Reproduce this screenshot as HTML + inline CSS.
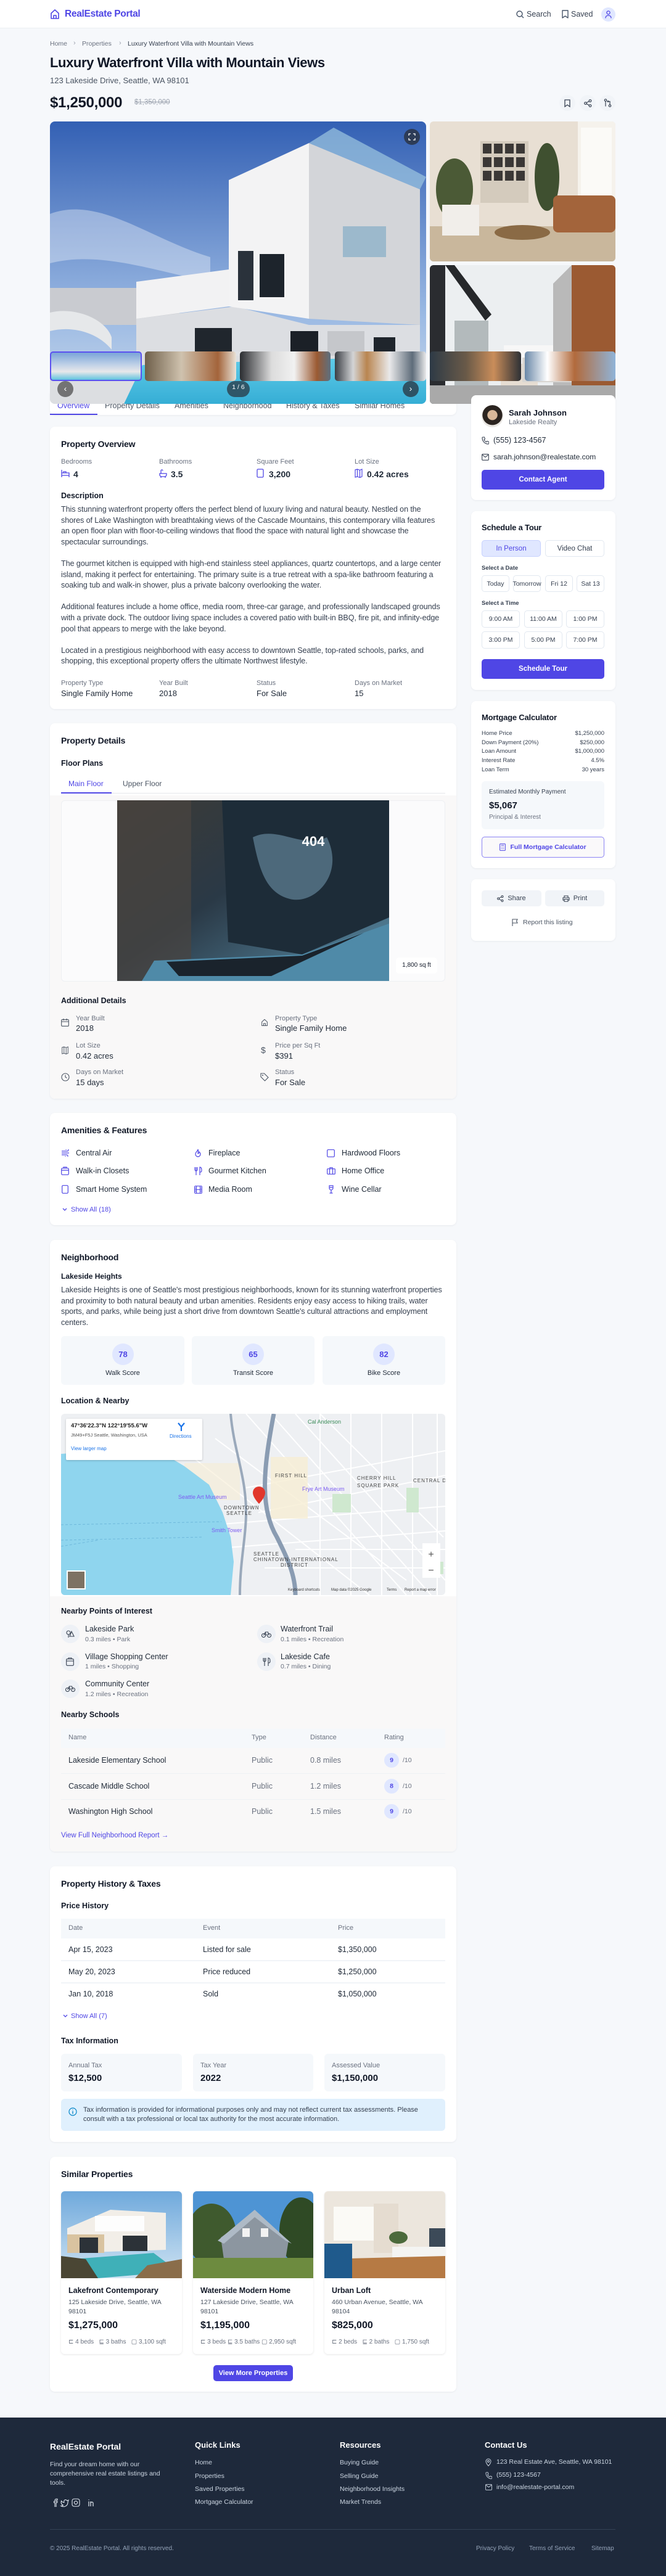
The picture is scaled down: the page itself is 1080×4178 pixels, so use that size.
<!DOCTYPE html>
<html><head><meta charset="utf-8">
<style>
*{box-sizing:border-box}
body{margin:0;width:1080px;height:4178px;position:relative;background:#f6f8fb;font-family:"Liberation Sans",sans-serif;color:#1f2937;overflow:hidden}
.t{position:absolute;white-space:nowrap;line-height:1}
.b{position:absolute}
.card{position:absolute;left:81px;width:659px;background:#fff;border-radius:8px;box-shadow:0 1px 3px rgba(15,23,42,.06)}
.scard{position:absolute;left:764px;width:234px;background:#fff;border-radius:8px;box-shadow:0 1px 3px rgba(15,23,42,.06)}
.h{font-size:14px;font-weight:700;color:#111827;letter-spacing:-.2px}
.h2{font-size:12.5px;font-weight:700;color:#111827}
.lab{font-size:11px;color:#6b7280}
.val{font-size:13px;color:#1f2937}
.pu{color:#4f46e5}
.g{color:#6b7280}
.para{position:absolute;left:99px;width:622px;font-size:12.6px;line-height:17.6px;color:#374151;letter-spacing:-.1px}
.para p{margin:0 0 17.6px}
.btn{position:absolute;border-radius:5px;display:flex;align-items:center;justify-content:center;font-size:11.5px}
.ob{border:1px solid #e2e8f0;background:#fff;color:#374151}
svg{display:block}
.ic{position:absolute}
</style></head><body>

<!-- HEADER -->
<div class="b" style="left:0;top:0;width:1080px;height:46px;background:#fff;border-bottom:1px solid #eceff3"></div>
<svg class="ic" style="left:81px;top:14px" width="16" height="18" viewBox="0 0 16 18"><path d="M2 7.5L8 2l6 5.5V16H2z M6 16v-5h4v5" fill="none" stroke="#4f46e5" stroke-width="1.6" stroke-linejoin="round"/></svg>
<div class="t" style="left:105px;top:15px;font-size:15.5px;font-weight:700;color:#4f46e5;letter-spacing:-.3px">RealEstate Portal</div>
<svg class="ic" style="left:837px;top:17px" width="13" height="13" viewBox="0 0 13 13"><circle cx="5.5" cy="5.5" r="4.5" fill="none" stroke="#475569" stroke-width="1.4"/><path d="M9 9l3 3" stroke="#475569" stroke-width="1.4"/></svg>
<div class="t" style="left:854px;top:17px;font-size:12.5px;color:#374151">Search</div>
<svg class="ic" style="left:911px;top:16px" width="11" height="14" viewBox="0 0 11 14"><path d="M1 1h9v12l-4.5-3L1 13z" fill="none" stroke="#475569" stroke-width="1.4" stroke-linejoin="round"/></svg>
<div class="t" style="left:926px;top:17px;font-size:12.5px;color:#374151">Saved</div>
<div class="b" style="left:975px;top:12px;width:23px;height:23px;border-radius:50%;background:#e0e7ff"></div>
<svg class="ic" style="left:981px;top:17px" width="11" height="13" viewBox="0 0 11 13"><circle cx="5.5" cy="3.5" r="2.6" fill="none" stroke="#4f46e5" stroke-width="1.3"/><path d="M1 12.5c0-3 2-4.5 4.5-4.5S10 9.5 10 12.5" fill="none" stroke="#4f46e5" stroke-width="1.3"/></svg>

<!-- BREADCRUMB / TITLE -->
<div class="t" style="left:81px;top:66px;font-size:10.5px;color:#6b7280">Home</div>
<div class="t" style="left:119px;top:65px;font-size:11px;color:#9ca3af">›</div>
<div class="t" style="left:133px;top:66px;font-size:10.5px;color:#6b7280">Properties</div>
<div class="t" style="left:193px;top:65px;font-size:11px;color:#9ca3af">›</div>
<div class="t" style="left:207px;top:66px;font-size:10.5px;color:#374151">Luxury Waterfront Villa with Mountain Views</div>
<div class="t" style="left:81px;top:91px;font-size:22px;font-weight:700;color:#111827;letter-spacing:-.4px">Luxury Waterfront Villa with Mountain Views</div>
<div class="t" style="left:81px;top:124px;font-size:13px;color:#4b5563">123 Lakeside Drive, Seattle, WA 98101</div>
<div class="t" style="left:81px;top:155px;font-size:24px;font-weight:700;color:#111827;letter-spacing:-.3px">$1,250,000</div>
<div class="t" style="left:218px;top:161px;font-size:11.5px;color:#9ca3af;text-decoration:line-through">$1,350,000</div>
<div class="b" style="left:907px;top:154px;width:26px;height:26px;border-radius:50%;background:#f1f4f8"></div>
<div class="b" style="left:940px;top:154px;width:26px;height:26px;border-radius:50%;background:#f1f4f8"></div>
<div class="b" style="left:972px;top:154px;width:26px;height:26px;border-radius:50%;background:#f1f4f8"></div>
<svg class="ic" style="left:915px;top:161px" width="10" height="13" viewBox="0 0 10 13"><path d="M1 1h8v11l-4-3-4 3z" fill="none" stroke="#374151" stroke-width="1.3"/></svg>
<svg class="ic" style="left:947px;top:161px" width="13" height="13" viewBox="0 0 13 13"><circle cx="10" cy="2.5" r="1.8" fill="none" stroke="#374151" stroke-width="1.2"/><circle cx="2.5" cy="6.5" r="1.8" fill="none" stroke="#374151" stroke-width="1.2"/><circle cx="10" cy="10.5" r="1.8" fill="none" stroke="#374151" stroke-width="1.2"/><path d="M4 5.6l4.5-2.4M4 7.4l4.5 2.4" stroke="#374151" stroke-width="1.2"/></svg>
<svg class="ic" style="left:979px;top:160px" width="13" height="14" viewBox="0 0 13 14"><circle cx="3" cy="2.5" r="1.7" fill="none" stroke="#374151" stroke-width="1.2"/><circle cx="10" cy="11.5" r="1.7" fill="none" stroke="#374151" stroke-width="1.2"/><path d="M3 4.5v8M10 9.5V4.5H6M7.5 3L6 4.5 7.5 6" fill="none" stroke="#374151" stroke-width="1.2"/></svg>

<!-- TABS CARD (behind gallery) -->
<div class="card" style="top:632px;height:41px"></div>
<div class="t pu" style="left:93px;top:652px;font-size:12.5px">Overview</div>
<div class="t" style="left:170px;top:652px;font-size:12.5px;color:#4b5563">Property Details</div>
<div class="t" style="left:283px;top:652px;font-size:12.5px;color:#4b5563">Amenities</div>
<div class="t" style="left:362px;top:652px;font-size:12.5px;color:#4b5563">Neighborhood</div>
<div class="t" style="left:464px;top:652px;font-size:12.5px;color:#4b5563">History &amp; Taxes</div>
<div class="t" style="left:575px;top:652px;font-size:12.5px;color:#4b5563">Similar Homes</div>
<div class="b" style="left:81px;top:671px;width:77px;height:2px;background:#4f46e5"></div>

<!-- GALLERY MAIN -->
<div class="b" style="left:81px;top:197px;width:610px;height:458px;border-radius:8px;overflow:hidden">
<svg width="610" height="458" viewBox="0 0 610 458">
<defs><linearGradient id="sky" x1="0" y1="0" x2="0" y2="1"><stop offset="0" stop-color="#3360b4"/><stop offset=".7" stop-color="#9dbbe4"/><stop offset="1" stop-color="#c9d8ea"/></linearGradient>
<linearGradient id="pool" x1="0" y1="0" x2="0" y2="1"><stop offset="0" stop-color="#4cc6e6"/><stop offset="1" stop-color="#1aa3d0"/></linearGradient></defs>
<rect width="610" height="458" fill="url(#sky)"/>
<path d="M0 150 C80 120 160 190 260 220 L260 260 C160 240 80 210 0 230z" fill="#fff" opacity=".35"/>
<rect x="0" y="270" width="210" height="60" fill="#c9cbd0"/>
<polygon points="140,260 290,240 290,300 140,320" fill="#f2f2f3"/>
<polygon points="140,320 300,300 420,330 600,330 600,420 140,420" fill="#dcdee2"/>
<polygon points="290,95 420,35 420,320 290,300" fill="#f3f3f4"/>
<polygon points="420,35 600,110 600,330 420,320" fill="#d3d5d9"/>
<polygon points="420,35 460,10 610,90 600,110" fill="#9cc6e0" opacity=".7"/>
<rect x="340" y="215" width="40" height="70" fill="#1d242c"/>
<rect x="305" y="210" width="25" height="80" fill="#2a323b"/>
<rect x="475" y="170" width="70" height="50" fill="#8fb2c8" opacity=".8"/>
<rect x="390" y="340" width="45" height="75" fill="#1b2027"/>
<rect x="235" y="335" width="60" height="80" fill="#20262d"/>
<rect x="525" y="350" width="35" height="65" fill="#1f252c"/>
<rect x="450" y="340" width="60" height="70" fill="#c5c7cb"/>
<polygon points="0,390 150,380 610,380 610,458 0,458" fill="#d8dadd"/>
<polygon points="150,395 610,380 610,458 120,458" fill="url(#pool)"/>
<path d="M0 310 C40 300 90 320 100 350 L100 370 C80 345 40 330 0 340z" fill="#e6e8ea"/>
</svg>
<div class="b" style="left:0;top:373px;width:610px;height:85px;background:rgba(255,255,255,.12)"></div>
</div>
<div class="b" style="left:655px;top:209px;width:26px;height:26px;border-radius:50%;background:rgba(40,45,55,.75)"></div>
<svg class="ic" style="left:662px;top:216px" width="12" height="12" viewBox="0 0 12 12"><path d="M1 4V1h3M8 1h3v3M11 8v3H8M4 11H1V8" fill="none" stroke="#fff" stroke-width="1.3"/></svg>

<!-- RIGHT IMAGES -->
<div class="b" style="left:697px;top:197px;width:301px;height:227px;border-radius:6px;overflow:hidden">
<svg width="301" height="227" viewBox="0 0 301 227">
<rect width="301" height="227" fill="#e8dfd3"/>
<rect x="240" y="0" width="61" height="190" fill="#f5f2ec"/>
<rect x="245" y="10" width="50" height="160" fill="#fbfaf7"/>
<rect x="82" y="32" width="78" height="100" fill="#d4cbbd"/>
<g fill="#3b3836"><rect x="86" y="36" width="14" height="16"/><rect x="104" y="36" width="14" height="16"/><rect x="122" y="36" width="14" height="16"/><rect x="140" y="36" width="14" height="16"/><rect x="86" y="58" width="14" height="16"/><rect x="104" y="58" width="14" height="16"/><rect x="122" y="58" width="14" height="16"/><rect x="140" y="58" width="14" height="16"/><rect x="86" y="80" width="14" height="16"/><rect x="104" y="80" width="14" height="16"/><rect x="122" y="80" width="14" height="16"/><rect x="140" y="80" width="14" height="16"/></g>
<ellipse cx="40" cy="110" rx="30" ry="50" fill="#4b5a36"/>
<ellipse cx="190" cy="90" rx="20" ry="55" fill="#3f5030"/>
<rect x="0" y="170" width="301" height="57" fill="#c9b79c"/>
<rect x="200" y="120" width="101" height="60" rx="8" fill="#a3643b"/>
<rect x="20" y="135" width="60" height="50" fill="#f1eeea"/>
<ellipse cx="150" cy="180" rx="45" ry="12" fill="#8a6a45"/>
</svg></div>
<div class="b" style="left:697px;top:430px;width:301px;height:225px;border-radius:6px;overflow:hidden">
<svg width="301" height="225" viewBox="0 0 301 225">
<rect width="301" height="225" fill="#eceff1"/>
<polygon points="230,0 301,0 301,225 230,225" fill="#9b5a32"/>
<polygon points="200,30 230,0 230,225 200,225" fill="#b9b9b9"/>
<rect x="0" y="0" width="25" height="225" fill="#2a2c30"/>
<polygon points="25,0 40,0 100,80 90,90" fill="#26282b"/>
<rect x="40" y="90" width="55" height="110" fill="#8d9699" opacity=".6"/>
<rect x="120" y="130" width="80" height="60" fill="#f7f7f7"/>
<rect x="115" y="160" width="60" height="40" fill="#e6ddd2"/>
<rect x="0" y="195" width="301" height="30" fill="#a9a9a9"/>
<rect x="150" y="150" width="80" height="40" fill="#d9d6d2"/>
</svg></div>

<!-- THUMBNAILS -->
<div class="b" style="left:81px;top:570px;width:149px;height:48px;border-radius:5px;background:linear-gradient(#7aa4d8 0%,#b9cde6 40%,#e8e8ea 70%,#5fc3df 100%);border:2px solid #5b50f0"></div>
<div class="b" style="left:235px;top:570px;width:148px;height:48px;border-radius:5px;background:linear-gradient(90deg,#6e5f4a,#cfc2ae 40%,#a3643b 80%,#e9e3d8)"></div>
<div class="b" style="left:389px;top:570px;width:147px;height:48px;border-radius:5px;background:linear-gradient(90deg,#2b2d31,#dcdcdc 35%,#f1f1f1 60%,#9b5a32 85%,#5c6f80)"></div>
<div class="b" style="left:543px;top:570px;width:148px;height:48px;border-radius:5px;background:linear-gradient(90deg,#3a3e44,#d3d4d6 20%,#b98550 35%,#e9e9ea 60%,#5e6c7a 85%,#e9e9ea)"></div>
<div class="b" style="left:697px;top:570px;width:148px;height:48px;border-radius:5px;background:linear-gradient(90deg,#2d3a46,#6a5a48 40%,#c98d5a 70%,#2d3035)"></div>
<div class="b" style="left:851px;top:570px;width:147px;height:48px;border-radius:5px;background:linear-gradient(90deg,#6a88a8,#ffffff 25%,#b26a3c 55%,#90b4d8)"></div>
<div class="b" style="left:93px;top:618px;width:26px;height:26px;border-radius:50%;background:rgba(70,70,70,.7);color:#fff;font-size:14px;text-align:center;line-height:25px">‹</div>
<div class="b" style="left:653px;top:618px;width:26px;height:26px;border-radius:50%;background:rgba(40,50,60,.75);color:#fff;font-size:14px;text-align:center;line-height:25px">›</div>
<div class="b" style="left:368px;top:618px;width:37px;height:26px;border-radius:13px;background:rgba(40,45,55,.7);color:#fff;font-size:10.5px;text-align:center;line-height:20px">1 / 6</div>

<!-- OVERVIEW CARD -->
<div class="card" style="top:692px;height:458px"></div>
<div class="t h" style="left:99px;top:713px">Property Overview</div>
<div class="t lab" style="left:99px;top:744px">Bedrooms</div>
<div class="t lab" style="left:258px;top:744px">Bathrooms</div>
<div class="t lab" style="left:416px;top:744px">Square Feet</div>
<div class="t lab" style="left:575px;top:744px">Lot Size</div>
<svg class="ic" style="left:99px;top:762px" width="14" height="12" viewBox="0 0 14 12"><path d="M1 0v12M1 5h12v7M1 9h12M4 5V3h4v2" fill="none" stroke="#4f46e5" stroke-width="1.3"/></svg>
<div class="t" style="left:119px;top:762px;font-size:14px;font-weight:700">4</div>
<svg class="ic" style="left:258px;top:761px" width="13" height="14" viewBox="0 0 13 14"><path d="M3 7V2.5A1.5 1.5 0 0 1 6 2.5M1 7h11v2a3 3 0 0 1-3 3H4a3 3 0 0 1-3-3zM3 12v2M10 12v2" fill="none" stroke="#4f46e5" stroke-width="1.3"/></svg>
<div class="t" style="left:277px;top:762px;font-size:14px;font-weight:700">3.5</div>
<svg class="ic" style="left:416px;top:760px" width="12" height="15" viewBox="0 0 12 15"><rect x="1" y="1" width="10" height="13" rx="1.5" fill="none" stroke="#4f46e5" stroke-width="1.3"/></svg>
<div class="t" style="left:436px;top:762px;font-size:14px;font-weight:700">3,200</div>
<svg class="ic" style="left:575px;top:760px" width="13" height="15" viewBox="0 0 13 15"><path d="M1 2l3.5-1 4 1.5L12 1v12l-3.5 1.5-4-1.5L1 14zM4.5 1v12M8.5 2.5v12" fill="none" stroke="#4f46e5" stroke-width="1.2"/></svg>
<div class="t" style="left:595px;top:762px;font-size:14px;font-weight:700">0.42 acres</div>
<div class="t h2" style="left:99px;top:798px">Description</div>
<div class="para" style="top:818px">
<p>This stunning waterfront property offers the perfect blend of luxury living and natural beauty. Nestled on the shores of Lake Washington with breathtaking views of the Cascade Mountains, this contemporary villa features an open floor plan with floor-to-ceiling windows that flood the space with natural light and showcase the spectacular surroundings.</p>
<p>The gourmet kitchen is equipped with high-end stainless steel appliances, quartz countertops, and a large center island, making it perfect for entertaining. The primary suite is a true retreat with a spa-like bathroom featuring a soaking tub and walk-in shower, plus a private balcony overlooking the water.</p>
<p>Additional features include a home office, media room, three-car garage, and professionally landscaped grounds with a private dock. The outdoor living space includes a covered patio with built-in BBQ, fire pit, and infinity-edge pool that appears to merge with the lake beyond.</p>
<p>Located in a prestigious neighborhood with easy access to downtown Seattle, top-rated schools, parks, and shopping, this exceptional property offers the ultimate Northwest lifestyle.</p>
</div>
<div class="t lab" style="left:99px;top:1103px">Property Type</div>
<div class="t lab" style="left:258px;top:1103px">Year Built</div>
<div class="t lab" style="left:416px;top:1103px">Status</div>
<div class="t lab" style="left:575px;top:1103px">Days on Market</div>
<div class="t val" style="left:99px;top:1118px">Single Family Home</div>
<div class="t val" style="left:258px;top:1118px">2018</div>
<div class="t val" style="left:416px;top:1118px">For Sale</div>
<div class="t val" style="left:575px;top:1118px">15</div>

<!-- SIDEBAR: AGENT -->
<div class="scard" style="top:641px;height:170px"></div>
<div class="b" style="left:781px;top:657px;width:35px;height:36px;border-radius:50%;background:radial-gradient(circle at 50% 45%,#d9b89a 0 30%,#2b2420 32% 60%,#e9e6e2 62%)"></div>
<div class="t" style="left:825px;top:663px;font-size:13px;font-weight:700;color:#111827">Sarah Johnson</div>
<div class="t g" style="left:825px;top:680px;font-size:11px">Lakeside Realty</div>
<svg class="ic" style="left:781px;top:708px" width="12" height="13" viewBox="0 0 12 13"><path d="M2 1h2.5l1 3-1.5 1.2a7 7 0 0 0 3.5 3.6L8.8 7.5l3 1V11a1.2 1.2 0 0 1-1.3 1.2A10 10 0 0 1 1 2.3 1.2 1.2 0 0 1 2 1z" fill="none" stroke="#374151" stroke-width="1.1"/></svg>
<div class="t" style="left:800px;top:708px;font-size:12.5px;color:#1f2937">(555) 123-4567</div>
<svg class="ic" style="left:781px;top:736px" width="12" height="11" viewBox="0 0 12 11"><rect x=".7" y=".7" width="10.6" height="9.6" rx="1" fill="none" stroke="#374151" stroke-width="1.1"/><path d="M1 1.5l5 4 5-4" fill="none" stroke="#374151" stroke-width="1.1"/></svg>
<div class="t" style="left:800px;top:735px;font-size:12px;color:#1f2937">sarah.johnson@realestate.com</div>
<div class="btn" style="left:781px;top:762px;width:199px;height:32px;background:#4f46e5;color:#fff;font-weight:600">Contact Agent</div>

<!-- SCHEDULE -->
<div class="scard" style="top:829px;height:290px"></div>
<div class="t h" style="left:781px;top:849px;font-size:13px">Schedule a Tour</div>
<div class="btn" style="left:781px;top:876px;width:96px;height:27px;background:#e0e7ff;color:#4f46e5;border:1px solid #c7d2fe">In Person</div>
<div class="btn ob" style="left:884px;top:876px;width:96px;height:27px">Video Chat</div>
<div class="t" style="left:781px;top:917px;font-size:9.5px;font-weight:700;color:#374151">Select a Date</div>
<div class="btn ob" style="left:781px;top:933px;width:45px;height:27px;font-size:10.5px">Today</div>
<div class="btn ob" style="left:832px;top:933px;width:45px;height:27px;font-size:10.5px">Tomorrow</div>
<div class="btn ob" style="left:884px;top:933px;width:45px;height:27px;font-size:10.5px">Fri 12</div>
<div class="btn ob" style="left:935px;top:933px;width:45px;height:27px;font-size:10.5px">Sat 13</div>
<div class="t" style="left:781px;top:974px;font-size:9.5px;font-weight:700;color:#374151">Select a Time</div>
<div class="btn ob" style="left:781px;top:990px;width:62px;height:28px;font-size:10.5px">9:00 AM</div>
<div class="btn ob" style="left:850px;top:990px;width:62px;height:28px;font-size:10.5px">11:00 AM</div>
<div class="btn ob" style="left:918px;top:990px;width:62px;height:28px;font-size:10.5px">1:00 PM</div>
<div class="btn ob" style="left:781px;top:1024px;width:62px;height:28px;font-size:10.5px">3:00 PM</div>
<div class="btn ob" style="left:850px;top:1024px;width:62px;height:28px;font-size:10.5px">5:00 PM</div>
<div class="btn ob" style="left:918px;top:1024px;width:62px;height:28px;font-size:10.5px">7:00 PM</div>
<div class="btn" style="left:781px;top:1069px;width:199px;height:32px;background:#4f46e5;color:#fff;font-weight:600">Schedule Tour</div>

<!-- MORTGAGE -->
<div class="scard" style="top:1137px;height:271px"></div>
<div class="t h" style="left:781px;top:1157px;font-size:13px">Mortgage Calculator</div>
<div class="t" style="left:781px;top:1185px;font-size:9.5px;color:#374151">Home Price</div>
<div class="t" style="left:781px;top:1200px;font-size:9.5px;color:#374151">Down Payment (20%)</div>
<div class="t" style="left:781px;top:1214px;font-size:9.5px;color:#374151">Loan Amount</div>
<div class="t" style="left:781px;top:1229px;font-size:9.5px;color:#374151">Interest Rate</div>
<div class="t" style="left:781px;top:1244px;font-size:9.5px;color:#374151">Loan Term</div>
<div class="t" style="right:100px;top:1185px;font-size:9.5px;color:#374151">$1,250,000</div>
<div class="t" style="right:100px;top:1200px;font-size:9.5px;color:#374151">$250,000</div>
<div class="t" style="right:100px;top:1214px;font-size:9.5px;color:#374151">$1,000,000</div>
<div class="t" style="right:100px;top:1229px;font-size:9.5px;color:#374151">4.5%</div>
<div class="t" style="right:100px;top:1244px;font-size:9.5px;color:#374151">30 years</div>
<div class="b" style="left:781px;top:1267px;width:199px;height:78px;border-radius:6px;background:#f5f8fb"></div>
<div class="t" style="left:793px;top:1280px;font-size:10px;color:#374151">Estimated Monthly Payment</div>
<div class="t" style="left:793px;top:1299px;font-size:15px;font-weight:700;color:#111827">$5,067</div>
<div class="t g" style="left:793px;top:1321px;font-size:10px">Principal &amp; Interest</div>
<div class="btn" style="left:781px;top:1357px;width:199px;height:34px;border:1px solid #8b83f3;background:#faf9fa;color:#4f46e5;font-size:10.5px;font-weight:600"><svg width="10" height="12" viewBox="0 0 10 12" style="margin-right:7px"><rect x=".6" y=".6" width="8.8" height="10.8" rx="1" fill="none" stroke="#4f46e5" stroke-width="1"/><path d="M2.5 3h5M2.5 6h1M4.5 6h1M6.5 6h1M2.5 8.5h1M4.5 8.5h1M6.5 8.5h1" stroke="#4f46e5" stroke-width="1"/></svg>Full Mortgage Calculator</div>

<!-- SHARE -->
<div class="scard" style="top:1426px;height:100px"></div>
<div class="btn" style="left:781px;top:1444px;width:97px;height:26px;background:#f1f4f8;color:#374151;font-size:11px"><svg width="11" height="11" viewBox="0 0 13 13" style="margin-right:6px"><circle cx="10" cy="2.5" r="1.8" fill="none" stroke="#374151" stroke-width="1.2"/><circle cx="2.5" cy="6.5" r="1.8" fill="none" stroke="#374151" stroke-width="1.2"/><circle cx="10" cy="10.5" r="1.8" fill="none" stroke="#374151" stroke-width="1.2"/><path d="M4 5.6l4.5-2.4M4 7.4l4.5 2.4" stroke="#374151" stroke-width="1.2"/></svg>Share</div>
<div class="btn" style="left:884px;top:1444px;width:96px;height:26px;background:#f1f4f8;color:#374151;font-size:11px"><svg width="12" height="11" viewBox="0 0 12 11" style="margin-right:6px"><path d="M3 4V1h6v3M3 8H1V4h10v4H9M3 6.5h6V10H3z" fill="none" stroke="#374151" stroke-width="1.1"/></svg>Print</div>
<svg class="ic" style="left:830px;top:1490px" width="10" height="12" viewBox="0 0 10 12"><path d="M1 12V1h8l-1.5 3L9 7H1" fill="none" stroke="#4b5563" stroke-width="1.1"/></svg>
<div class="t" style="left:848px;top:1491px;font-size:10.5px;color:#4b5563">Report this listing</div>

<!-- PROPERTY DETAILS -->
<div class="card" style="top:1173px;height:609px;overflow:hidden"><div class="b" style="left:0;top:117px;width:659px;height:492px;background:#f9f8f8"></div></div>
<div class="t h" style="left:99px;top:1194px">Property Details</div>
<div class="t h2" style="left:99px;top:1232px">Floor Plans</div>
<div class="t pu" style="left:111px;top:1265px;font-size:12px">Main Floor</div>
<div class="t" style="left:199px;top:1265px;font-size:12px;color:#4b5563">Upper Floor</div>
<div class="b" style="left:99px;top:1286px;width:623px;height:1px;background:#e5e7eb"></div>
<div class="b" style="left:99px;top:1285px;width:82px;height:2px;background:#4f46e5"></div>
<div class="b" style="left:99px;top:1298px;width:623px;height:294px;background:#fbfbfc;border:1px solid #eef0f3;border-radius:6px"></div>
<div class="b" style="left:190px;top:1298px;width:441px;height:293px;overflow:hidden">
<svg width="441" height="293" viewBox="0 0 441 293">
<defs><linearGradient id="lap" x1="0" y1="0" x2="1" y2="1"><stop offset="0" stop-color="#3d3a36"/><stop offset=".45" stop-color="#2a3946"/><stop offset="1" stop-color="#5b90ab"/></linearGradient></defs>
<rect width="441" height="293" fill="url(#lap)"/>
<rect x="0" y="0" width="120" height="293" fill="#4a4540" opacity=".7"/>
<polygon points="170,0 441,0 441,190 300,250 180,230" fill="#1d2c38"/>
<path d="M220 60 C260 40 300 80 340 60 C370 120 320 170 280 160 C240 150 230 110 220 60z" fill="#6e93a8" opacity=".6"/>
<polygon points="60,260 300,250 441,200 441,293 40,293" fill="#4f8aa8"/>
<polygon points="80,262 300,252 400,215 250,285 100,285" fill="#1a232c"/>
<text x="318" y="74" font-family="Liberation Sans" font-size="22" font-weight="700" fill="#fff" text-anchor="middle">404</text>
</svg></div>
<div class="b" style="left:642px;top:1553px;width:67px;height:26px;border-radius:5px;background:#fff;font-size:10px;color:#111827;text-align:center;line-height:26px">1,800 sq ft</div>
<div class="t h2" style="left:99px;top:1617px">Additional Details</div>
<svg class="ic" style="left:99px;top:1652px" width="13" height="13" viewBox="0 0 13 13"><rect x=".7" y="1.7" width="11.6" height="10.6" rx="1.2" fill="none" stroke="#4b5563" stroke-width="1.1"/><path d="M.7 5h11.6M4 0v3M9 0v3" stroke="#4b5563" stroke-width="1.1"/></svg>
<svg class="ic" style="left:99px;top:1697px" width="13" height="13" viewBox="0 0 13 15"><path d="M1 2l3.5-1 4 1.5L12 1v12l-3.5 1.5-4-1.5L1 14zM4.5 1v12M8.5 2.5v12" fill="none" stroke="#4b5563" stroke-width="1.1"/></svg>
<svg class="ic" style="left:99px;top:1740px" width="14" height="14" viewBox="0 0 14 14"><circle cx="7" cy="7" r="6" fill="none" stroke="#4b5563" stroke-width="1.1"/><path d="M7 3.5V7l2.5 1.5" fill="none" stroke="#4b5563" stroke-width="1.1"/></svg>
<svg class="ic" style="left:422px;top:1652px" width="14" height="13" viewBox="0 0 16 18"><path d="M2 7.5L8 2l6 5.5V16H2z M6 16v-5h4v5" fill="none" stroke="#4b5563" stroke-width="1.4"/></svg>
<div class="t" style="left:423px;top:1696px;font-size:14px;color:#4b5563">$</div>
<svg class="ic" style="left:422px;top:1740px" width="14" height="14" viewBox="0 0 14 14"><path d="M1 1h5.5L13 7.5 7.5 13 1 6.5z" fill="none" stroke="#4b5563" stroke-width="1.1"/><circle cx="4" cy="4" r="1" fill="#4b5563"/></svg>
<div class="t lab" style="left:123px;top:1647px">Year Built</div><div class="t val" style="left:123px;top:1661px">2018</div>
<div class="t lab" style="left:123px;top:1691px">Lot Size</div><div class="t val" style="left:123px;top:1706px">0.42 acres</div>
<div class="t lab" style="left:123px;top:1734px">Days on Market</div><div class="t val" style="left:123px;top:1749px">15 days</div>
<div class="t lab" style="left:446px;top:1647px">Property Type</div><div class="t val" style="left:446px;top:1661px">Single Family Home</div>
<div class="t lab" style="left:446px;top:1691px">Price per Sq Ft</div><div class="t val" style="left:446px;top:1706px">$391</div>
<div class="t lab" style="left:446px;top:1734px">Status</div><div class="t val" style="left:446px;top:1749px">For Sale</div>

<!-- AMENITIES -->
<div class="card" style="top:1805px;height:182px"></div>
<div class="t h" style="left:99px;top:1826px">Amenities &amp; Features</div>
<div class="t val" style="left:123px;top:1864px;font-size:12.5px">Central Air</div>
<div class="t val" style="left:338px;top:1864px;font-size:12.5px">Fireplace</div>
<div class="t val" style="left:554px;top:1864px;font-size:12.5px">Hardwood Floors</div>
<div class="t val" style="left:123px;top:1893px;font-size:12.5px">Walk-in Closets</div>
<div class="t val" style="left:338px;top:1893px;font-size:12.5px">Gourmet Kitchen</div>
<div class="t val" style="left:554px;top:1893px;font-size:12.5px">Home Office</div>
<div class="t val" style="left:123px;top:1923px;font-size:12.5px">Smart Home System</div>
<div class="t val" style="left:338px;top:1923px;font-size:12.5px">Media Room</div>
<div class="t val" style="left:554px;top:1923px;font-size:12.5px">Wine Cellar</div>
<svg class="ic" style="left:99px;top:1864px" width="14" height="12" viewBox="0 0 14 12"><path d="M1 3h9a2 2 0 1 0-2-2M1 6h12M1 9h8a2 2 0 1 1-2 2" fill="none" stroke="#4f46e5" stroke-width="1.2"/></svg>
<svg class="ic" style="left:315px;top:1863px" width="12" height="14" viewBox="0 0 12 14"><path d="M6 1c0 3-4 4-4 8a4 4 0 0 0 8 0c0-2-1-3-2-4 0 2-1 3-2 3 0-3 1-4 0-7z" fill="none" stroke="#4f46e5" stroke-width="1.2"/></svg>
<svg class="ic" style="left:530px;top:1864px" width="13" height="13" viewBox="0 0 13 13"><rect x=".7" y=".7" width="11.6" height="11.6" rx="1.5" fill="none" stroke="#4f46e5" stroke-width="1.2"/></svg>
<svg class="ic" style="left:99px;top:1892px" width="13" height="14" viewBox="0 0 13 14"><rect x=".7" y="2.7" width="11.6" height="10.6" rx="1.5" fill="none" stroke="#4f46e5" stroke-width="1.2"/><path d="M4 2.7V1h5v1.7M.7 6h11.6" fill="none" stroke="#4f46e5" stroke-width="1.2"/></svg>
<svg class="ic" style="left:315px;top:1892px" width="13" height="14" viewBox="0 0 13 14"><path d="M1 1v4a2 2 0 0 0 4 0V1M3 1v13M9 14V1c2 0 3 2 3 5s-1 3-3 3" fill="none" stroke="#4f46e5" stroke-width="1.2"/></svg>
<svg class="ic" style="left:530px;top:1893px" width="14" height="12" viewBox="0 0 14 12"><rect x=".7" y="2.7" width="12.6" height="8.6" rx="1" fill="none" stroke="#4f46e5" stroke-width="1.2"/><path d="M5 2.7V.7h4v2M4.5 3v8M9.5 3v8" fill="none" stroke="#4f46e5" stroke-width="1.2"/></svg>
<svg class="ic" style="left:100px;top:1922px" width="11" height="14" viewBox="0 0 11 14"><rect x=".7" y=".7" width="9.6" height="12.6" rx="1.5" fill="none" stroke="#4f46e5" stroke-width="1.2"/></svg>
<svg class="ic" style="left:315px;top:1923px" width="13" height="13" viewBox="0 0 13 13"><rect x=".7" y=".7" width="11.6" height="11.6" rx="1" fill="none" stroke="#4f46e5" stroke-width="1.2"/><path d="M3.5 1v11M9.5 1v11M1 4h2.5M1 6.5h11M1 9h2.5M9.5 4H12M9.5 9H12" stroke="#4f46e5" stroke-width="1.1"/></svg>
<svg class="ic" style="left:532px;top:1922px" width="10" height="14" viewBox="0 0 10 14"><path d="M2 1h6v4a3 3 0 0 1-6 0zM5 8v5M2.5 13h5M2 4h6" fill="none" stroke="#4f46e5" stroke-width="1.2"/></svg>
<svg class="ic" style="left:101px;top:1959px" width="8" height="6" viewBox="0 0 8 6"><path d="M1 1l3 3 3-3" fill="none" stroke="#4f46e5" stroke-width="1.3"/></svg>
<div class="t pu" style="left:115px;top:1957px;font-size:11px">Show All (18)</div>

<!-- NEIGHBORHOOD -->
<div class="card" style="top:2011px;height:992px;overflow:hidden"><div class="b" style="left:0;top:578px;width:659px;height:414px;background:#f9f8f8"></div></div>
<div class="t h" style="left:99px;top:2032px">Neighborhood</div>
<div class="t h2" style="left:99px;top:2064px;font-size:12px">Lakeside Heights</div>
<div class="para" style="top:2084px">Lakeside Heights is one of Seattle's most prestigious neighborhoods, known for its stunning waterfront properties and proximity to both natural beauty and urban amenities. Residents enjoy easy access to hiking trails, water sports, and parks, while being just a short drive from downtown Seattle's cultural attractions and employment centers.</div>
<div class="b" style="left:99px;top:2167px;width:200px;height:79px;border-radius:6px;background:#f5f8fb"></div>
<div class="b" style="left:311px;top:2167px;width:199px;height:79px;border-radius:6px;background:#f5f8fb"></div>
<div class="b" style="left:523px;top:2167px;width:199px;height:79px;border-radius:6px;background:#f5f8fb"></div>
<div class="b" style="left:182px;top:2179px;width:35px;height:35px;border-radius:50%;background:#e0e7ff;color:#4f46e5;font-weight:700;font-size:13px;text-align:center;line-height:35px">78</div>
<div class="b" style="left:393px;top:2179px;width:35px;height:35px;border-radius:50%;background:#e0e7ff;color:#4f46e5;font-weight:700;font-size:13px;text-align:center;line-height:35px">65</div>
<div class="b" style="left:605px;top:2179px;width:35px;height:35px;border-radius:50%;background:#e0e7ff;color:#4f46e5;font-weight:700;font-size:13px;text-align:center;line-height:35px">82</div>
<div class="b" style="left:99px;top:2221px;width:200px;text-align:center;font-size:11px;color:#1f2937">Walk Score</div>
<div class="b" style="left:311px;top:2221px;width:199px;text-align:center;font-size:11px;color:#1f2937">Transit Score</div>
<div class="b" style="left:523px;top:2221px;width:199px;text-align:center;font-size:11px;color:#1f2937">Bike Score</div>
<div class="t h2" style="left:99px;top:2266px">Location &amp; Nearby</div>

<!-- MAP -->
<div class="b" style="left:99px;top:2293px;width:623px;height:294px;border-radius:6px;overflow:hidden">
<svg width="623" height="294" viewBox="0 0 623 294">
<rect width="623" height="294" fill="#eef0f3"/>
<g stroke="#ffffff" stroke-width="2" fill="none">
<path d="M300 0 L560 294M340 0 L600 294M380 0L623 270M200 60L500 294M250 40L560 270M420 0L620 200"/>
<path d="M0 200L623 150M100 230L623 190M300 120L623 60M320 160L623 100M380 220L623 220M330 250L623 250"/>
<path d="M420 0V294M470 0V294M520 0V294M570 0V294M610 0V294"/>
</g>
<rect x="340" y="70" width="60" height="100" fill="#f6edd3" opacity=".8"/>
<rect x="200" y="80" width="90" height="60" fill="#f6edd3" opacity=".6"/>
<rect x="440" y="130" width="30" height="30" fill="#cfe8cf"/><rect x="560" y="120" width="20" height="40" fill="#cfe8cf"/><rect x="600" y="240" width="20" height="20" fill="#cfe8cf"/>
<path d="M345 0 C330 80 320 150 350 200 C365 230 380 260 380 294" fill="none" stroke="#8a9cb2" stroke-width="7"/>
<path d="M275 0 C280 60 300 100 300 160 C300 200 290 240 290 294" fill="none" stroke="#9aa9bb" stroke-width="4"/>
<polygon points="0,65 150,55 200,85 240,115 262,160 275,200 280,240 275,294 0,294" fill="#8fd5ee"/>
<path d="M0 180 L260 175M0 205 L230 200M0 215 L60 205" stroke="#6fb9dc" stroke-width="1" stroke-dasharray="4 3" fill="none"/>
<path d="M311 128 a10 10 0 0 1 20 0 c0 8-10 18-10 18 s-10-10-10-18z" fill="#e1372c"/>
<rect x="10" y="255" width="29" height="29" fill="#7d7263" stroke="#fff" stroke-width="2"/>
<rect x="586" y="210" width="29" height="56" fill="#fff"/>
<text x="600" y="233" font-family="Liberation Sans" font-size="16" text-anchor="middle" fill="#555">+</text>
<text x="600" y="259" font-family="Liberation Sans" font-size="16" text-anchor="middle" fill="#555">−</text>
<g font-family="Liberation Sans" font-size="8" fill="#444" letter-spacing="1">
<text x="347" y="103">FIRST HILL</text><text x="480" y="107">CHERRY HILL</text><text x="480" y="119">SQUARE PARK</text>
<text x="264" y="155">DOWNTOWN</text><text x="268" y="164">SEATTLE</text>
<text x="312" y="230">SEATTLE</text><text x="312" y="239">CHINATOWN-INTERNATIONAL</text><text x="356" y="248">DISTRICT</text>
<text x="571" y="111">CENTRAL D</text></g>
<g font-family="Liberation Sans" font-size="9" fill="#7c5cf2"><text x="190" y="138">Seattle Art Museum</text><text x="391" y="125">Frye Art Museum</text><text x="244" y="192">Smith Tower</text></g>
<text x="400" y="16" font-family="Liberation Sans" font-size="9" fill="#3c8c5a">Cal Anderson</text>
<g font-family="Liberation Sans" font-size="6" fill="#333"><text x="368" y="287">Keyboard shortcuts</text><text x="438" y="287">Map data ©2025 Google</text><text x="528" y="287">Terms</text><text x="557" y="287">Report a map error</text></g>
</svg>
<div class="b" style="left:8px;top:8px;width:221px;height:67px;background:#fff;border-radius:2px;box-shadow:0 1px 3px rgba(0,0,0,.2)"></div>
<div class="t" style="left:16px;top:15px;font-size:9.5px;font-weight:700;color:#222">47°36'22.3"N 122°19'55.6"W</div>
<div class="t" style="left:16px;top:31px;font-size:7.5px;color:#555">JM49+F5J Seattle, Washington, USA</div>
<div class="t" style="left:16px;top:53px;font-size:8px;color:#1a73e8">View larger map</div>
<div class="t" style="left:176px;top:33px;font-size:8px;color:#1a73e8">Directions</div>
<svg class="ic" style="left:188px;top:14px" width="14" height="14" viewBox="0 0 14 14"><path d="M2 1l5 6v7M12 1L7 7" fill="none" stroke="#1a73e8" stroke-width="2.2"/></svg>
</div>

<div class="t h2" style="left:99px;top:2607px">Nearby Points of Interest</div>
<div class="b" style="left:99px;top:2635px;width:30px;height:30px;border-radius:50%;background:#eef1f6"></div>
<div class="b" style="left:99px;top:2680px;width:30px;height:30px;border-radius:50%;background:#eef1f6"></div>
<div class="b" style="left:99px;top:2724px;width:30px;height:30px;border-radius:50%;background:#eef1f6"></div>
<div class="b" style="left:417px;top:2635px;width:30px;height:30px;border-radius:50%;background:#eef1f6"></div>
<div class="b" style="left:417px;top:2680px;width:30px;height:30px;border-radius:50%;background:#eef1f6"></div>
<svg class="ic" style="left:107px;top:2644px" width="14" height="12" viewBox="0 0 14 12"><circle cx="4" cy="4" r="3" fill="none" stroke="#374151" stroke-width="1.1"/><path d="M4 7v5M9 2l4 8H6z" fill="none" stroke="#374151" stroke-width="1.1"/></svg>
<svg class="ic" style="left:107px;top:2688px" width="13" height="14" viewBox="0 0 13 14"><rect x=".7" y="2.7" width="11.6" height="10.6" rx="1.5" fill="none" stroke="#374151" stroke-width="1.1"/><path d="M4 2.7V1h5v1.7M.7 6h11.6" fill="none" stroke="#374151" stroke-width="1.1"/></svg>
<svg class="ic" style="left:106px;top:2733px" width="16" height="11" viewBox="0 0 16 11"><circle cx="3.5" cy="7.5" r="3" fill="none" stroke="#374151" stroke-width="1.1"/><circle cx="12.5" cy="7.5" r="3" fill="none" stroke="#374151" stroke-width="1.1"/><path d="M3.5 7.5L6.5 2h4l2 5.5M6 2L8 7.5" fill="none" stroke="#374151" stroke-width="1.1"/></svg>
<svg class="ic" style="left:424px;top:2645px" width="16" height="11" viewBox="0 0 16 11"><circle cx="3.5" cy="7.5" r="3" fill="none" stroke="#374151" stroke-width="1.1"/><circle cx="12.5" cy="7.5" r="3" fill="none" stroke="#374151" stroke-width="1.1"/><path d="M3.5 7.5L6.5 2h4l2 5.5M6 2L8 7.5" fill="none" stroke="#374151" stroke-width="1.1"/></svg>
<svg class="ic" style="left:426px;top:2688px" width="13" height="14" viewBox="0 0 13 14"><path d="M1 1v4a2 2 0 0 0 4 0V1M3 1v13M9 14V1c2 0 3 2 3 5s-1 3-3 3" fill="none" stroke="#374151" stroke-width="1.1"/></svg>
<div class="t val" style="left:138px;top:2636px;font-size:12.5px">Lakeside Park</div><div class="t g" style="left:138px;top:2654px;font-size:10.5px">0.3 miles • Park</div>
<div class="t val" style="left:138px;top:2681px;font-size:12.5px">Village Shopping Center</div><div class="t g" style="left:138px;top:2698px;font-size:10.5px">1 miles • Shopping</div>
<div class="t val" style="left:138px;top:2725px;font-size:12.5px">Community Center</div><div class="t g" style="left:138px;top:2743px;font-size:10.5px">1.2 miles • Recreation</div>
<div class="t val" style="left:455px;top:2636px;font-size:12.5px">Waterfront Trail</div><div class="t g" style="left:455px;top:2654px;font-size:10.5px">0.1 miles • Recreation</div>
<div class="t val" style="left:455px;top:2681px;font-size:12.5px">Lakeside Cafe</div><div class="t g" style="left:455px;top:2698px;font-size:10.5px">0.7 miles • Dining</div>
<div class="t h2" style="left:99px;top:2775px">Nearby Schools</div>
<div class="b" style="left:99px;top:2804px;width:623px;height:31px;background:#f5f8fb"></div>
<div class="t lab" style="left:111px;top:2813px">Name</div><div class="t lab" style="left:408px;top:2813px">Type</div><div class="t lab" style="left:503px;top:2813px">Distance</div><div class="t lab" style="left:623px;top:2813px">Rating</div>
<div class="b" style="left:99px;top:2876px;width:623px;height:1px;background:#eef1f5"></div>
<div class="b" style="left:99px;top:2918px;width:623px;height:1px;background:#eef1f5"></div>
<div class="t val" style="left:111px;top:2849px;font-size:12.5px">Lakeside Elementary School</div><div class="t g" style="left:408px;top:2849px;font-size:12.5px">Public</div><div class="t g" style="left:503px;top:2849px;font-size:12.5px">0.8 miles</div>
<div class="t val" style="left:111px;top:2891px;font-size:12.5px">Cascade Middle School</div><div class="t g" style="left:408px;top:2891px;font-size:12.5px">Public</div><div class="t g" style="left:503px;top:2891px;font-size:12.5px">1.2 miles</div>
<div class="t val" style="left:111px;top:2932px;font-size:12.5px">Washington High School</div><div class="t g" style="left:408px;top:2932px;font-size:12.5px">Public</div><div class="t g" style="left:503px;top:2932px;font-size:12.5px">1.5 miles</div>
<div class="b" style="left:623px;top:2843px;width:24px;height:24px;border-radius:50%;background:#e0e7ff;color:#4f46e5;font-size:10.5px;font-weight:700;text-align:center;line-height:24px">9</div>
<div class="b" style="left:623px;top:2885px;width:24px;height:24px;border-radius:50%;background:#e0e7ff;color:#4f46e5;font-size:10.5px;font-weight:700;text-align:center;line-height:24px">8</div>
<div class="b" style="left:623px;top:2926px;width:24px;height:24px;border-radius:50%;background:#e0e7ff;color:#4f46e5;font-size:10.5px;font-weight:700;text-align:center;line-height:24px">9</div>
<div class="t g" style="left:653px;top:2850px;font-size:10.5px">/10</div><div class="t g" style="left:653px;top:2892px;font-size:10.5px">/10</div><div class="t g" style="left:653px;top:2933px;font-size:10.5px">/10</div>
<div class="t pu" style="left:99px;top:2972px;font-size:11.5px">View Full Neighborhood Report →</div>

<!-- HISTORY -->
<div class="card" style="top:3027px;height:447px"></div>
<div class="t h" style="left:99px;top:3048px">Property History &amp; Taxes</div>
<div class="t h2" style="left:99px;top:3085px">Price History</div>
<div class="b" style="left:99px;top:3112px;width:623px;height:32px;background:#f5f8fb"></div>
<div class="t lab" style="left:111px;top:3122px">Date</div><div class="t lab" style="left:329px;top:3122px">Event</div><div class="t lab" style="left:548px;top:3122px">Price</div>
<div class="b" style="left:99px;top:3179px;width:623px;height:2px;background:#f1f4f8"></div>
<div class="b" style="left:99px;top:3215px;width:623px;height:2px;background:#f1f4f8"></div>
<div class="t val" style="left:111px;top:3156px;font-size:12.5px">Apr 15, 2023</div><div class="t val" style="left:329px;top:3156px;font-size:12.5px">Listed for sale</div><div class="t val" style="left:548px;top:3156px;font-size:12.5px">$1,350,000</div>
<div class="t val" style="left:111px;top:3192px;font-size:12.5px">May 20, 2023</div><div class="t val" style="left:329px;top:3192px;font-size:12.5px">Price reduced</div><div class="t val" style="left:548px;top:3192px;font-size:12.5px">$1,250,000</div>
<div class="t val" style="left:111px;top:3228px;font-size:12.5px">Jan 10, 2018</div><div class="t val" style="left:329px;top:3228px;font-size:12.5px">Sold</div><div class="t val" style="left:548px;top:3228px;font-size:12.5px">$1,050,000</div>
<svg class="ic" style="left:102px;top:3267px" width="8" height="6" viewBox="0 0 8 6"><path d="M1 1l3 3 3-3" fill="none" stroke="#4f46e5" stroke-width="1.3"/></svg>
<div class="t pu" style="left:115px;top:3265px;font-size:11px">Show All (7)</div>
<div class="t h2" style="left:99px;top:3304px">Tax Information</div>
<div class="b" style="left:99px;top:3331px;width:196px;height:61px;border-radius:6px;background:#f5f8fb"></div>
<div class="b" style="left:313px;top:3331px;width:195px;height:61px;border-radius:6px;background:#f5f8fb"></div>
<div class="b" style="left:526px;top:3331px;width:196px;height:61px;border-radius:6px;background:#f5f8fb"></div>
<div class="t lab" style="left:111px;top:3345px">Annual Tax</div><div class="t" style="left:111px;top:3363px;font-size:15px;font-weight:700;color:#111827">$12,500</div>
<div class="t lab" style="left:325px;top:3345px">Tax Year</div><div class="t" style="left:325px;top:3363px;font-size:15px;font-weight:700;color:#111827">2022</div>
<div class="t lab" style="left:538px;top:3345px">Assessed Value</div><div class="t" style="left:538px;top:3363px;font-size:15px;font-weight:700;color:#111827">$1,150,000</div>
<div class="b" style="left:99px;top:3404px;width:623px;height:52px;border-radius:6px;background:#e0f0fd"></div>
<svg class="ic" style="left:111px;top:3418px" width="14" height="14" viewBox="0 0 14 14"><circle cx="7" cy="7" r="6" fill="none" stroke="#0284c7" stroke-width="1.2"/><path d="M7 6v4.5M7 3.5v1" stroke="#0284c7" stroke-width="1.3"/></svg>
<div class="b" style="left:135px;top:3415px;width:580px;font-size:11px;line-height:15px;color:#374151">Tax information is provided for informational purposes only and may not reflect current tax assessments. Please consult with a tax professional or local tax authority for the most accurate information.</div>

<!-- SIMILAR -->
<div class="card" style="top:3498px;height:381px"></div>
<div class="t h" style="left:99px;top:3519px">Similar Properties</div>
<div class="b" style="left:99px;top:3554px;width:196px;height:264px;border-radius:6px;background:#fff;box-shadow:0 1px 3px rgba(0,0,0,.1);overflow:hidden">
<svg width="196" height="141" viewBox="0 0 196 141"><defs><linearGradient id="s1" x1="0" y1="0" x2="0" y2="1"><stop offset="0" stop-color="#6fa9dc"/><stop offset="1" stop-color="#cfe3f2"/></linearGradient></defs>
<rect width="196" height="141" fill="url(#s1)"/><polygon points="10,60 80,30 170,35 170,95 10,100" fill="#f2eee8"/><rect x="55" y="40" width="80" height="25" fill="#fdfdfd"/><rect x="10" y="70" width="60" height="30" fill="#d9c3a0"/><rect x="30" y="75" width="30" height="25" fill="#2c3238"/><rect x="100" y="72" width="40" height="25" fill="#2c3238"/><polygon points="20,110 150,100 190,130 60,141" fill="#3fb0b8"/><polygon points="0,105 40,110 60,141 0,141" fill="#4a4634"/><polygon points="140,120 196,110 196,141 120,141" fill="#8a6d4a"/></svg>
</div>
<div class="b" style="left:313px;top:3554px;width:195px;height:264px;border-radius:6px;background:#fff;box-shadow:0 1px 3px rgba(0,0,0,.1);overflow:hidden">
<svg width="195" height="141" viewBox="0 0 195 141"><rect width="195" height="141" fill="#4e94d4"/><ellipse cx="30" cy="70" rx="40" ry="50" fill="#3f5a2e"/><ellipse cx="175" cy="65" rx="35" ry="55" fill="#2f4a25"/><polygon points="45,75 100,35 155,80 150,110 50,110" fill="#8c96a0"/><polygon points="40,80 100,30 160,85 150,80 100,42 50,85" fill="#aebac6"/><rect x="80" y="60" width="12" height="14" fill="#f2f2f2"/><rect x="110" y="60" width="12" height="14" fill="#f2f2f2"/><rect x="0" y="108" width="195" height="33" fill="#6d8b3f"/></svg>
</div>
<div class="b" style="left:526px;top:3554px;width:196px;height:264px;border-radius:6px;background:#fff;box-shadow:0 1px 3px rgba(0,0,0,.1);overflow:hidden">
<svg width="196" height="141" viewBox="0 0 196 141"><rect width="196" height="141" fill="#ece6dd"/><rect x="15" y="25" width="65" height="55" fill="#fbfaf6"/><rect x="80" y="20" width="40" height="80" fill="#e5dcd0"/><rect x="170" y="60" width="26" height="40" fill="#3c4a58"/><rect x="110" y="90" width="86" height="30" fill="#f4f4f2"/><polygon points="0,110 196,105 196,141 0,141" fill="#b67a44"/><rect x="0" y="85" width="45" height="56" fill="#1f5a8c"/><ellipse cx="120" cy="75" rx="15" ry="10" fill="#4c6a3c"/></svg>
</div>
<div class="t" style="left:111px;top:3709px;font-size:12.5px;font-weight:700;color:#111827">Lakefront Contemporary</div>
<div class="t" style="left:325px;top:3709px;font-size:12.5px;font-weight:700;color:#111827">Waterside Modern Home</div>
<div class="t" style="left:538px;top:3709px;font-size:12.5px;font-weight:700;color:#111827">Urban Loft</div>
<div class="b" style="left:111px;top:3727px;width:175px;font-size:10.5px;line-height:15px;color:#4b5563">125 Lakeside Drive, Seattle, WA 98101</div>
<div class="b" style="left:325px;top:3727px;width:175px;font-size:10.5px;line-height:15px;color:#4b5563">127 Lakeside Drive, Seattle, WA 98101</div>
<div class="b" style="left:538px;top:3727px;width:175px;font-size:10.5px;line-height:15px;color:#4b5563">460 Urban Avenue, Seattle, WA 98104</div>
<div class="t" style="left:111px;top:3764px;font-size:16px;font-weight:700;color:#111827">$1,275,000</div>
<div class="t" style="left:325px;top:3764px;font-size:16px;font-weight:700;color:#111827">$1,195,000</div>
<div class="t" style="left:538px;top:3764px;font-size:16px;font-weight:700;color:#111827">$825,000</div>
<div class="t g" style="left:111px;top:3794px;font-size:10px">⊏ 4 beds &nbsp; ⊑ 3 baths &nbsp; ▢ 3,100 sqft</div>
<div class="t g" style="left:325px;top:3794px;font-size:10px">⊏ 3 beds ⊑ 3.5 baths ▢ 2,950 sqft</div>
<div class="t g" style="left:538px;top:3794px;font-size:10px">⊏ 2 beds &nbsp; ⊑ 2 baths &nbsp; ▢ 1,750 sqft</div>
<div class="btn" style="left:346px;top:3836px;width:129px;height:26px;background:#4f46e5;color:#fff;font-size:11px;font-weight:600">View More Properties</div>

<!-- FOOTER -->
<div class="b" style="left:0;top:3921px;width:1080px;height:257px;background:#1e293b"></div>
<div class="t" style="left:81px;top:3961px;font-size:14px;font-weight:700;color:#fff">RealEstate Portal</div>
<div class="b" style="left:81px;top:3990px;width:200px;font-size:10.5px;line-height:15px;color:#cbd5e1">Find your dream home with our comprehensive real estate listings and tools.</div>
<svg class="ic" style="left:83px;top:4052px" width="96" height="14" viewBox="0 0 96 14"><path d="M6 14V7H4.5V5H6V3.5C6 2 7 1 8.5 1H10v2H9c-.5 0-1 .3-1 1V5h2l-.3 2H8v7" fill="none" stroke="#e2e8f0" stroke-width="1.1"/><path d="M28 3c-1 .5-2 .8-2.5.8A2.5 2.5 0 0 0 21 6v.7c-2 0-3.5-1-4.5-2.5 0 0-2 5 3 7-1 .8-2.3 1.2-3.5 1.2 5 2.8 11 0 11-6.2z" fill="none" stroke="#e2e8f0" stroke-width="1.1"/><rect x="34" y="1" width="12" height="12" rx="3" fill="none" stroke="#e2e8f0" stroke-width="1.1"/><circle cx="40" cy="7" r="2.6" fill="none" stroke="#e2e8f0" stroke-width="1.1"/><path d="M61 5v8M61 2v1M64 13V5M64 8c0-2 4-3 4 0v5" fill="none" stroke="#e2e8f0" stroke-width="1.2"/></svg>
<div class="t" style="left:316px;top:3959px;font-size:13px;font-weight:700;color:#fff">Quick Links</div>
<div class="t" style="left:551px;top:3959px;font-size:13px;font-weight:700;color:#fff">Resources</div>
<div class="t" style="left:786px;top:3959px;font-size:13px;font-weight:700;color:#fff">Contact Us</div>
<div class="t" style="left:316px;top:3989px;font-size:10.5px;color:#cbd5e1">Home</div>
<div class="t" style="left:316px;top:4011px;font-size:10.5px;color:#cbd5e1">Properties</div>
<div class="t" style="left:316px;top:4032px;font-size:10.5px;color:#cbd5e1">Saved Properties</div>
<div class="t" style="left:316px;top:4053px;font-size:10.5px;color:#cbd5e1">Mortgage Calculator</div>
<div class="t" style="left:551px;top:3989px;font-size:10.5px;color:#cbd5e1">Buying Guide</div>
<div class="t" style="left:551px;top:4011px;font-size:10.5px;color:#cbd5e1">Selling Guide</div>
<div class="t" style="left:551px;top:4032px;font-size:10.5px;color:#cbd5e1">Neighborhood Insights</div>
<div class="t" style="left:551px;top:4053px;font-size:10.5px;color:#cbd5e1">Market Trends</div>
<svg class="ic" style="left:787px;top:3987px" width="10" height="13" viewBox="0 0 10 13"><path d="M5 12.5S1 8 1 5a4 4 0 0 1 8 0c0 3-4 7.5-4 7.5z" fill="none" stroke="#cbd5e1" stroke-width="1"/><circle cx="5" cy="5" r="1.5" fill="none" stroke="#cbd5e1" stroke-width="1"/></svg>
<svg class="ic" style="left:787px;top:4009px" width="11" height="12" viewBox="0 0 12 13"><path d="M2 1h2.5l1 3-1.5 1.2a7 7 0 0 0 3.5 3.6L8.8 7.5l3 1V11a1.2 1.2 0 0 1-1.3 1.2A10 10 0 0 1 1 2.3 1.2 1.2 0 0 1 2 1z" fill="none" stroke="#cbd5e1" stroke-width="1"/></svg>
<svg class="ic" style="left:787px;top:4029px" width="11" height="10" viewBox="0 0 12 11"><rect x=".6" y=".6" width="10.8" height="9.8" rx="1" fill="none" stroke="#cbd5e1" stroke-width="1"/><path d="M1 1.5l5 4 5-4" fill="none" stroke="#cbd5e1" stroke-width="1"/></svg>
<div class="t" style="left:805px;top:3988px;font-size:10.5px;color:#cbd5e1">123 Real Estate Ave, Seattle, WA 98101</div>
<div class="t" style="left:805px;top:4009px;font-size:10.5px;color:#cbd5e1">(555) 123-4567</div>
<div class="t" style="left:805px;top:4029px;font-size:10.5px;color:#cbd5e1">info@realestate-portal.com</div>
<div class="b" style="left:81px;top:4102px;width:917px;height:1px;background:#334155"></div>
<div class="t" style="left:81px;top:4129px;font-size:10px;color:#94a3b8">© 2025 RealEstate Portal. All rights reserved.</div>
<div class="t" style="left:772px;top:4129px;font-size:10px;color:#94a3b8">Privacy Policy</div>
<div class="t" style="left:858px;top:4129px;font-size:10px;color:#94a3b8">Terms of Service</div>
<div class="t" style="left:959px;top:4129px;font-size:10px;color:#94a3b8">Sitemap</div>
</body></html>
